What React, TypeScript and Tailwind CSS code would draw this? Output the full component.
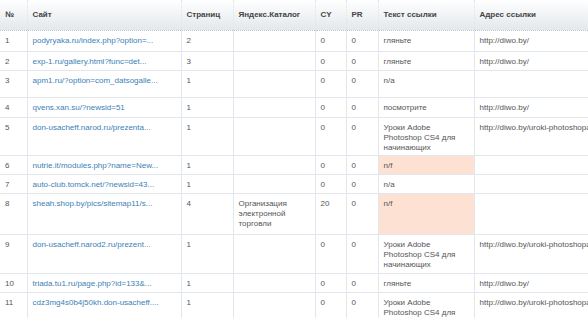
const cols = [27, 154, 52, 82, 31, 32, 96, 170];

type Row = {
  n: string;
  site: string;
  pages: string;
  cat?: string[];
  cy: string;
  pr: string;
  text: string[];
  pink?: boolean;
  url?: string;
  h: string;
};

const LESSON = ["Уроки Adobe", "Photoshop CS4 для", "начинающих"];

const rows: Row[] = [
  { n: "1", site: "podyryaka.ru/index.php?option=...", pages: "2", cy: "0", pr: "0", text: ["гляньте"], url: "http://diwo.by/", h: "h-[21px]" },
  { n: "2", site: "exp-1.ru/gallery.html?func=det...", pages: "3", cy: "0", pr: "0", text: ["гляньте"], url: "http://diwo.by/", h: "h-[19px]" },
  { n: "3", site: "apm1.ru/?option=com_datsogalle...", pages: "1", cy: "0", pr: "0", text: ["n/a"], h: "h-[27px]" },
  { n: "4", site: "qvens.xan.su/?newsid=51", pages: "1", cy: "0", pr: "0", text: ["посмотрите"], url: "http://diwo.by/", h: "h-[20px]" },
  { n: "5", site: "don-usacheff.narod.ru/prezenta...", pages: "1", cy: "0", pr: "0", text: LESSON, url: "http://diwo.by/uroki-photoshopa", h: "h-[38px]" },
  { n: "6", site: "nutrie.it/modules.php?name=New...", pages: "1", cy: "0", pr: "0", text: ["n/f"], pink: true, h: "h-[19px]" },
  { n: "7", site: "auto-club.tomck.net/?newsid=43...", pages: "1", cy: "0", pr: "0", text: ["n/a"], h: "h-[19px]" },
  { n: "8", site: "sheah.shop.by/pics/sitemap11/s...", pages: "4", cat: ["Организация", "электронной", "торговли"], cy: "20", pr: "0", text: ["n/f"], pink: true, h: "h-[41px]" },
  { n: "9", site: "don-usacheff.narod2.ru/prezent...", pages: "1", cy: "0", pr: "0", text: LESSON, url: "http://diwo.by/uroki-photoshopa", h: "h-[39px]" },
  { n: "10", site: "triada.tu1.ru/page.php?id=133&...", pages: "1", cy: "0", pr: "0", text: ["гляньте"], url: "http://diwo.by/", h: "h-[19px]" },
  { n: "11", site: "cdz3mg4s0b4j50kh.don-usacheff....", pages: "1", cy: "0", pr: "0", text: LESSON, url: "http://diwo.by/uroki-photoshopa", h: "h-[39px]" },
];

const heads = ["№", "Сайт", "Страниц", "Яндекс.Каталог", "CY", "PR", "Текст ссылки", "Адрес ссылки"];

const td = "align-top pl-[5px] pr-[3px] pt-[5px] border-l border-b border-[#e1e7ec] first:border-l-0 whitespace-nowrap overflow-hidden";

export default function App() {
  return (
    <div className="w-[588px] h-[318px] overflow-hidden bg-white text-[8px] leading-[10px] text-[#555]" style={{ fontFamily: '"Liberation Sans", Arial, sans-serif' }}>
      <table className="table-fixed border-collapse w-[644px]">
        <colgroup>
          {cols.map((w, i) => (
            <col key={i} style={{ width: w }} />
          ))}
        </colgroup>
        <thead>
          <tr className="h-[30px] bg-gradient-to-b from-[#ffffff] via-[#f1f3f5] to-[#e4e8eb]">
            {heads.map((h) => (
              <th
                key={h}
                className="text-left align-middle pl-[5px] font-bold text-[#444] border-l border-[#dde3e8] first:border-l-0 border-b border-dotted border-b-[#b9c3cb] whitespace-nowrap"
              >
                {h}
              </th>
            ))}
          </tr>
        </thead>
        <tbody>
          {rows.map((r) => (
            <tr key={r.n} className={r.h}>
              <td className={td}>{r.n}</td>
              <td className={td}>
                <a href="#" className="text-[#3c7fb6]">{r.site}</a>
              </td>
              <td className={td}>{r.pages}</td>
              <td className={td}>
                {r.cat?.map((l) => (
                  <div key={l}>{l}</div>
                ))}
              </td>
              <td className={td}>{r.cy}</td>
              <td className={td}>{r.pr}</td>
              <td className={`${td} ${r.pink ? "bg-[#fde2d3]" : ""}`}>
                {r.text.map((l) => (
                  <div key={l}>{l}</div>
                ))}
              </td>
              <td className={td}>{r.url}</td>
            </tr>
          ))}
        </tbody>
      </table>
    </div>
  );
}
